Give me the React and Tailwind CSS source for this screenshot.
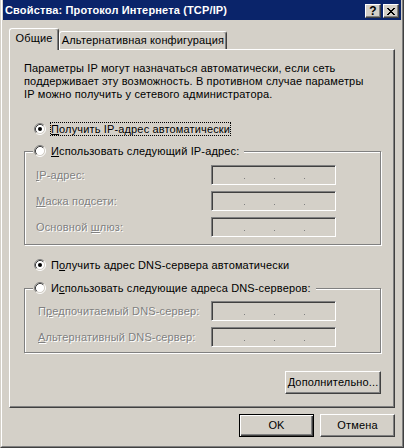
import React from 'react';

// classic 3D edges
const raised =
  'border border-t-white border-l-white border-r-[#404040] border-b-[#404040] shadow-[inset_-1px_-1px_0_#808080]';
const disabledText = 'text-[#808080] [text-shadow:1px_1px_0_#fff]';

const Radio = ({ checked }) => (
  <svg width="12" height="12" viewBox="0 0 12 12" className="shrink-0">
    <circle cx="6" cy="6" r="4.5" fill="#fff" />
    <path d="M2.11 9.89A5.5 5.5 0 0 1 9.89 2.11" stroke="#808080" fill="none" />
    <path d="M9.89 2.11A5.5 5.5 0 0 1 2.11 9.89" stroke="#fff" fill="none" />
    <path d="M2.82 9.18A4.5 4.5 0 0 1 9.18 2.82" stroke="#404040" fill="none" />
    <path d="M9.18 2.82A4.5 4.5 0 0 1 2.82 9.18" stroke="#d4d0c8" fill="none" />
    {checked && <circle cx="6" cy="6" r="2" fill="#000" />}
  </svg>
);

const CloseGlyph = () => (
  <svg width="8" height="7" viewBox="0 0 8 7" shapeRendering="crispEdges">
    <rect x="0" y="0" width="2" height="1" />
    <rect x="6" y="0" width="2" height="1" />
    <rect x="1" y="1" width="2" height="1" />
    <rect x="5" y="1" width="2" height="1" />
    <rect x="2" y="2" width="4" height="1" />
    <rect x="3" y="3" width="2" height="1" />
    <rect x="2" y="4" width="4" height="1" />
    <rect x="1" y="5" width="2" height="1" />
    <rect x="5" y="5" width="2" height="1" />
    <rect x="0" y="6" width="2" height="1" />
    <rect x="6" y="6" width="2" height="1" />
  </svg>
);

const RadioLabel = ({ checked, focused, children }) => (
  <div className="flex items-center h-[14px] gap-[4px]">
    <Radio checked={checked} />
    <span
      className={`leading-[12px] whitespace-nowrap border ${
        focused ? 'border-dotted border-black' : 'border-transparent'
      }`}
    >
      {children}
    </span>
  </div>
);

const IpBox = () => (
  <div className="flex w-[125px] h-[20px] border border-t-[#808080] border-l-[#808080] border-r-white border-b-white shadow-[inset_1px_1px_0_#404040]">
    <span className="w-[1px] h-[1px] bg-[#808080] mt-[12px] ml-[32px]" />
    <span className="w-[1px] h-[1px] bg-[#808080] mt-[12px] ml-[29px]" />
    <span className="w-[1px] h-[1px] bg-[#808080] mt-[12px] ml-[29px]" />
  </div>
);

const FieldRow = ({ label, indent = 'pl-[11px]' }) => (
  <div className="flex items-center h-[20px]">
    <div className={`w-[186px] whitespace-nowrap ${indent} ${disabledText}`}>{label}</div>
    <IpBox />
  </div>
);

const Group = ({ heading, children, className = '' }) => (
  <div
    className={`w-[357px] border border-[#808080] shadow-[inset_1px_1px_0_#fff,1px_1px_0_#fff] ${className}`}
  >
    <div className="flex -mt-[8px] ml-[8px]">
      <div className="bg-[#d4d0c8] pl-[1px] pr-[4px]">{heading}</div>
    </div>
    {children}
  </div>
);

const Button = ({ children, isDefault, className = '' }) => (
  <div
    className={`flex items-center justify-center h-[23px] ${
      isDefault
        ? 'border border-black shadow-[inset_1px_1px_0_#fff,inset_-1px_-1px_0_#404040,inset_-2px_-2px_0_#808080]'
        : raised
    } ${className}`}
  >
    {children}
  </div>
);

export default function App() {
  return (
    <div className="w-[404px] h-[448px] border-l border-r border-b border-l-[#d4d0c8] border-r-[#404040] border-b-[#404040] bg-[#d4d0c8] font-['Liberation_Sans',Arial,sans-serif] text-[11px] leading-[13px] tracking-[0.15px] text-black select-none">
      <div className="h-full flex flex-col border-l border-r border-b border-l-white border-r-[#808080] border-b-[#808080] px-[1px] pb-[1px]">
        {/* title bar */}
        <div className="flex items-start justify-between h-[20px] bg-[#0a246a] pl-[2px] pr-[2px]">
          <span className="pt-[4px] font-bold text-white whitespace-nowrap">
            Свойства: Протокол Интернета (TCP/IP)
          </span>
          <div className="flex gap-[2px] pt-[4px]">
            <div className={`flex items-center justify-center w-[16px] h-[14px] bg-[#d4d0c8] font-bold text-[12px] leading-[12px] ${raised}`}>
              ?
            </div>
            <div className={`flex items-center justify-center w-[16px] h-[14px] bg-[#d4d0c8] ${raised}`}>
              <CloseGlyph />
            </div>
          </div>
        </div>

        {/* tabs */}
        <div className="flex items-end h-[21px] mt-[8px] ml-[6px]">
          <div className="relative z-10 w-[50px] h-[22px] -mb-[1px] bg-[#d4d0c8] border-l border-t border-r border-l-white border-t-white border-r-[#404040] rounded-t-[3px] shadow-[inset_-1px_0_0_#808080] pt-[3px] text-center">
            Общие
          </div>
          <div className="w-[168px] h-[18px] border-l border-t border-r border-l-white border-t-white border-r-[#404040] rounded-t-[3px] shadow-[inset_-1px_0_0_#808080] pt-[2px] text-center whitespace-nowrap">
            Альтернативная конфигурация
          </div>
        </div>

        {/* pane */}
        <div className={`ml-[6px] w-[386px] h-[359px] ${raised} pl-[14px] pt-[12px]`}>
          <p className="whitespace-nowrap">
            Параметры IP могут назначаться автоматически, если сеть
            <br />
            поддерживает эту возможность. В противном случае параметры
            <br />
            IP можно получить у сетевого администратора.
          </p>

          <div className="mt-[21px] ml-[10px]">
            <RadioLabel checked focused>
              <u>П</u>олучить IP-адрес автоматически
            </RadioLabel>
          </div>

          <Group
            className="mt-[15px]"
            heading={
              <RadioLabel>
                <u>И</u>спользовать следующий IP-адрес:
              </RadioLabel>
            }
          >
            <div className="flex flex-col gap-[6px] mt-[7px] mb-[7px]">
              <FieldRow label={<><u>I</u>P-адрес:</>} />
              <FieldRow label={<><u>М</u>аска подсети:</>} />
              <FieldRow label={<>Основной <u>ш</u>люз:</>} />
            </div>
          </Group>

          <div className="mt-[13px] ml-[10px]">
            <RadioLabel checked>
              П<u>о</u>лучить адрес DNS-сервера автоматически
            </RadioLabel>
          </div>

          <Group
            className="mt-[16px]"
            heading={
              <RadioLabel>
                И<u>с</u>пользовать следующие адреса DNS-серверов:
              </RadioLabel>
            }
          >
            <div className="flex flex-col gap-[6px] mt-[6px] mb-[5px]">
              <FieldRow indent="pl-[13px]" label={<>П<u>р</u>едпочитаемый DNS-сервер:</>} />
              <FieldRow indent="pl-[13px]" label={<><u>А</u>льтернативный DNS-сервер:</>} />
            </div>
          </Group>

          <div className="flex justify-end w-[357px] mt-[18px]">
            <Button className="w-[96px]">
              <span>
                <u>Д</u>ополнительно...
              </span>
            </Button>
          </div>
        </div>

        {/* dialog buttons */}
        <div className="flex justify-end gap-[6px] mt-[6px] mr-[6px]">
          <Button isDefault className="w-[75px]">
            OK
          </Button>
          <Button className="w-[75px]">Отмена</Button>
        </div>
      </div>
    </div>
  );
}
